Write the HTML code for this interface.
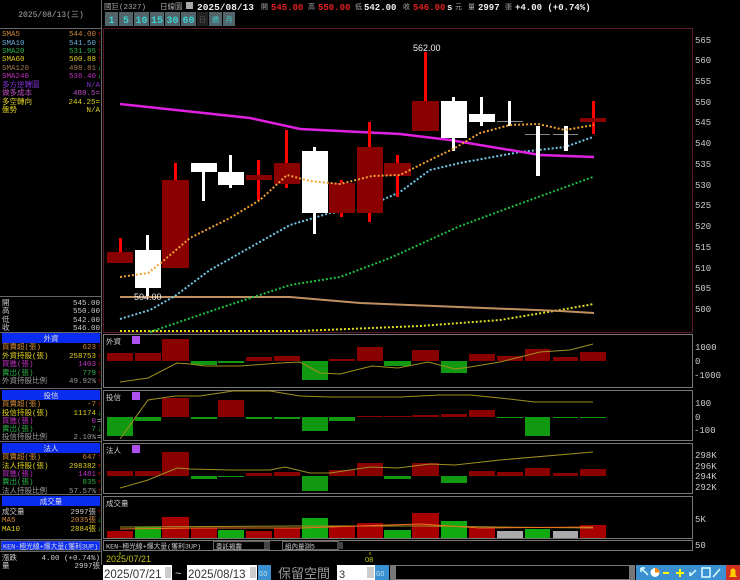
<!DOCTYPE html>
<html><head><meta charset="utf-8"><style>
html,body{margin:0;padding:0;background:#000;width:740px;height:580px;overflow:hidden}
svg{display:block}
text{font-family:"Liberation Mono","Noto Sans CJK TC",monospace}
.s{font-family:"Liberation Sans","Noto Sans CJK TC",sans-serif}
</style></head><body>
<svg width="740" height="580" viewBox="0 0 740 580" xmlns="http://www.w3.org/2000/svg" font-size="9">
<rect width="740" height="580" fill="#000"/>
<line x1="101.5" y1="0" x2="101.5" y2="565" stroke="#666"/>
<line x1="0" y1="28.5" x2="101" y2="28.5" stroke="#666"/>
<text x="51" y="17" fill="#aaa" text-anchor="middle" font-size="8">2025/08/13(三)</text>
<g font-size="7.5">
<text x="2" y="36" fill="#d08a3a">SMA5</text><text x="96" y="36" fill="#d08a3a" text-anchor="end">544.00</text><text x="97" y="36" fill="#f00">↑</text>
<text x="2" y="45" fill="#6ab0e0">SMA10</text><text x="96" y="45" fill="#6ab0e0" text-anchor="end">541.50</text><text x="97" y="45" fill="#f00">↑</text>
<text x="2" y="53" fill="#2bb04a">SMA20</text><text x="96" y="53" fill="#2bb04a" text-anchor="end">531.95</text><text x="97" y="53" fill="#f00">↑</text>
<text x="2" y="61" fill="#e0d020">SMA60</text><text x="96" y="61" fill="#e0d020" text-anchor="end">500.88</text><text x="97" y="61" fill="#f00">↑</text>
<text x="2" y="70" fill="#a07850">SMA120</text><text x="96" y="70" fill="#a07850" text-anchor="end">498.81</text><text x="97" y="70" fill="#2c2">↓</text>
<text x="2" y="78" fill="#c030c0">SMA240</text><text x="96" y="78" fill="#c030c0" text-anchor="end">536.40</text><text x="97" y="78" fill="#2c2">↓</text>
<text x="2" y="87" fill="#8030d0">多方逆轉圖</text><text x="100" y="87" fill="#8030d0" text-anchor="end">N/A</text>
<text x="2" y="95" fill="#c050c0">做多成本</text><text x="100" y="95" fill="#c050c0" text-anchor="end">488.5=</text>
<text x="2" y="104" fill="#e0d020">多空轉向</text><text x="100" y="104" fill="#e0d020" text-anchor="end">244.25=</text>
<text x="2" y="112" fill="#e0d020">盤勢</text><text x="100" y="112" fill="#e0d020" text-anchor="end">N/A</text>
</g>
<line x1="0" y1="296.5" x2="101" y2="296.5" stroke="#666"/>
<g font-size="7.5" fill="#ccc">
<text x="2" y="305">開</text><text x="100" y="305" text-anchor="end">545.00</text>
<text x="2" y="313">高</text><text x="100" y="313" text-anchor="end">550.00</text>
<text x="2" y="322">低</text><text x="100" y="322" text-anchor="end">542.00</text>
<text x="2" y="330">收</text><text x="100" y="330" text-anchor="end">546.00</text>
</g>
<line x1="0" y1="332.5" x2="101" y2="332.5" stroke="#666"/>
<rect x="2" y="333" width="98" height="10" fill="#0a2cf0"/><text x="51" y="341" fill="#ddd" text-anchor="middle" font-size="7.5">外資</text>
<g font-size="7.5">
<text x="2" y="349" fill="#d08a3a">買賣超(張)</text><text x="96" y="349" fill="#d08a3a" text-anchor="end">623</text><text x="97" y="349" fill="#f00">↑</text>
<text x="2" y="358" fill="#e0d020">外資持股(張)</text><text x="96" y="358" fill="#e0d020" text-anchor="end">258753</text><text x="97" y="358" fill="#f00">↑</text>
<text x="2" y="366" fill="#c030c0">買進(張)</text><text x="96" y="366" fill="#c030c0" text-anchor="end">1403</text><text x="97" y="366" fill="#f00">↑</text>
<text x="2" y="375" fill="#2bb04a">賣出(張)</text><text x="96" y="375" fill="#2bb04a" text-anchor="end">779</text><text x="97" y="375" fill="#f00">↑</text>
<text x="2" y="383" fill="#999">外資持股比例</text><text x="96" y="383" fill="#999" text-anchor="end">49.92%</text><text x="97" y="383" fill="#f00">↑</text>
</g>
<line x1="0" y1="388.5" x2="101" y2="388.5" stroke="#666"/>
<rect x="2" y="390" width="98" height="10" fill="#0a2cf0"/><text x="51" y="398" fill="#ddd" text-anchor="middle" font-size="7.5">投信</text>
<g font-size="7.5">
<text x="2" y="406" fill="#d08a3a">買賣超(張)</text><text x="96" y="406" fill="#d08a3a" text-anchor="end">-7</text><text x="97" y="406" fill="#f00">↑</text>
<text x="2" y="415" fill="#e0d020">投信持股(張)</text><text x="96" y="415" fill="#e0d020" text-anchor="end">11174</text><text x="97" y="415" fill="#2c2">↓</text>
<text x="2" y="423" fill="#c030c0">買進(張)</text><text x="96" y="423" fill="#c030c0" text-anchor="end">0</text><text x="97" y="423" fill="#ccc">=</text>
<text x="2" y="431" fill="#2bb04a">賣出(張)</text><text x="96" y="431" fill="#2bb04a" text-anchor="end">7</text><text x="97" y="431" fill="#2c2">↓</text>
<text x="2" y="439" fill="#999">投信持股比例</text><text x="96" y="439" fill="#999" text-anchor="end">2.10%</text><text x="97" y="439" fill="#ccc">=</text>
</g>
<line x1="0" y1="441.5" x2="101" y2="441.5" stroke="#666"/>
<rect x="2" y="443" width="98" height="10" fill="#0a2cf0"/><text x="51" y="451" fill="#ddd" text-anchor="middle" font-size="7.5">法人</text>
<g font-size="7.5">
<text x="2" y="459" fill="#d08a3a">買賣超(張)</text><text x="96" y="459" fill="#d08a3a" text-anchor="end">647</text><text x="97" y="459" fill="#f00">↑</text>
<text x="2" y="468" fill="#e0d020">法人持股(張)</text><text x="96" y="468" fill="#e0d020" text-anchor="end">298382</text><text x="97" y="468" fill="#f00">↑</text>
<text x="2" y="476" fill="#c030c0">買進(張)</text><text x="96" y="476" fill="#c030c0" text-anchor="end">1481</text><text x="97" y="476" fill="#f00">↑</text>
<text x="2" y="484" fill="#2bb04a">賣出(張)</text><text x="96" y="484" fill="#2bb04a" text-anchor="end">835</text><text x="97" y="484" fill="#f00">↑</text>
<text x="2" y="493" fill="#999">法人持股比例</text><text x="96" y="493" fill="#999" text-anchor="end">57.57%</text><text x="97" y="493" fill="#f00">↑</text>
</g>
<line x1="0" y1="494.5" x2="101" y2="494.5" stroke="#666"/>
<rect x="2" y="496" width="98" height="10" fill="#0a2cf0"/><text x="51" y="504" fill="#ddd" text-anchor="middle" font-size="7.5">成交量</text>
<g font-size="7.5">
<text x="2" y="514" fill="#ccc">成交量</text><text x="96" y="514" fill="#ccc" text-anchor="end">2997張</text><text x="97" y="514" fill="#f00">↑</text>
<text x="2" y="522" fill="#d08a3a">MA5</text><text x="96" y="522" fill="#d08a3a" text-anchor="end">2035張</text><text x="97" y="522" fill="#2c2">↓</text>
<text x="2" y="531" fill="#e0d020">MA10</text><text x="96" y="531" fill="#e0d020" text-anchor="end">2884張</text><text x="97" y="531" fill="#2c2">↓</text>
</g>
<line x1="0" y1="539.5" x2="101" y2="539.5" stroke="#666"/>
<rect x="1" y="541" width="99" height="9" fill="#0a2cf0" stroke="#aaa" stroke-width="0.5"/><text x="3" y="548.5" fill="#ddd" font-size="6.8">KEN-極光線+爆大量(獲利3UP)</text>
<line x1="0" y1="551.5" x2="101" y2="551.5" stroke="#666"/>
<g font-size="7.5" fill="#ccc">
<text x="2" y="560">漲跌</text><text x="100" y="560" text-anchor="end">4.00 (+0.74%)</text>
<text x="2" y="568">量</text><text x="100" y="568" text-anchor="end">2997張</text>
</g>

<!-- top header -->
<text x="104" y="9" fill="#aaa" font-size="7.5">國巨(2327)</text>
<text x="160" y="9" fill="#aaa" font-size="7.5">日線圖</text>
<rect x="186" y="2" width="7" height="7" fill="#aaa"/>
<g class="s" font-weight="bold" font-size="9">
<text x="197" y="10" fill="#eee" font-size="9.5">2025/08/13</text>
<text x="261" y="9" fill="#aaa" font-size="7" font-weight="normal">開</text><text x="271" y="10" fill="#e02020">545.00</text>
<text x="308" y="9" fill="#aaa" font-size="7" font-weight="normal">高</text><text x="318" y="10" fill="#e02020">550.00</text>
<text x="355" y="9" fill="#aaa" font-size="7" font-weight="normal">低</text><text x="364" y="10" fill="#eee">542.00</text>
<text x="403" y="9" fill="#aaa" font-size="7" font-weight="normal">收</text><text x="413" y="10" fill="#e02020">546.00</text>
<text x="447" y="10" fill="#eee">s</text><text x="455" y="9" fill="#aaa" font-size="7" font-weight="normal">元</text>
<text x="468" y="9" fill="#aaa" font-size="7" font-weight="normal">量</text><text x="478" y="10" fill="#eee">2997</text>
<text x="505" y="9" fill="#aaa" font-size="7" font-weight="normal">張</text><text x="515" y="10" fill="#eee">+4.00 (+0.74%)</text>
</g>
<g font-size="10" font-weight="bold" class="s" text-anchor="middle">
<rect x="105" y="12" width="13" height="14" fill="#52646a"/><text x="111.5" y="23" fill="#3cd0d0">1</text>
<rect x="119" y="12" width="14" height="14" fill="#52646a"/><text x="126" y="23" fill="#3cd0d0">5</text>
<rect x="134" y="12" width="15" height="14" fill="#52646a"/><text x="141.5" y="23" fill="#3cd0d0">10</text>
<rect x="150" y="12" width="14" height="14" fill="#52646a"/><text x="157" y="23" fill="#3cd0d0">15</text>
<rect x="165" y="12" width="15" height="14" fill="#52646a"/><text x="172.5" y="23" fill="#3cd0d0">30</text>
<rect x="181" y="12" width="15" height="14" fill="#52646a"/><text x="188.5" y="23" fill="#3cd0d0">60</text>
<rect x="197" y="12" width="11" height="14" fill="#222"/><text x="202.5" y="22" fill="#555" font-size="7" font-weight="normal">日</text>
<rect x="209" y="12" width="13" height="14" fill="#52646a"/><text x="215.5" y="22" fill="#3cd0d0" font-size="7" font-weight="normal">週</text>
<rect x="223" y="12" width="12" height="14" fill="#52646a"/><text x="229" y="22" fill="#3cd0d0" font-size="7" font-weight="normal">月</text>
</g>

<rect x="103.5" y="28.5" width="589" height="304" fill="none" stroke="#5a1a2a"/>
<g fill="#ccc" font-size="9" class="s">
<text x="695" y="43">565</text><text x="695" y="63">560</text><text x="695" y="84">555</text><text x="695" y="105">550</text><text x="695" y="125">545</text><text x="695" y="146">540</text><text x="695" y="167">535</text><text x="695" y="188">530</text><text x="695" y="208">525</text><text x="695" y="229">520</text><text x="695" y="250">515</text><text x="695" y="271">510</text><text x="695" y="291">505</text><text x="695" y="312">500</text>
</g>

<polyline points="120,331 300,331 420,326 500,320 560,310 594,304" fill="none" stroke="#e0e020" stroke-width="2" stroke-dasharray="2,2"/>
<polyline points="120,297 290,297 360,303 560,311 594,313" fill="none" stroke="#c09060" stroke-width="2"/>
<polyline points="150,332 220,308 290,285 340,277 390,258 460,226 530,200 593,177" fill="none" stroke="#20c040" stroke-width="2" stroke-dasharray="2,2"/>
<polyline points="120,319 150,310 175,296 210,270 290,225 330,213 360,210 400,192 430,170 460,163 520,152 565,147 593,137" fill="none" stroke="#70c8e8" stroke-width="2" stroke-dasharray="2,2"/>
<polyline points="120,104 250,118 300,129 400,134 450,140 540,155 594,157" fill="none" stroke="#e020e0" stroke-width="2.5"/>

<g fill="#8a0000">
<rect x="119" y="238" width="3" height="14" fill="#f00"/><rect x="107" y="252" width="26" height="11"/>
<rect x="174" y="163" width="3" height="17" fill="#f00"/><rect x="162" y="180" width="27" height="88"/>
<rect x="257" y="160" width="3" height="40" fill="#f00"/><rect x="246" y="175" width="26" height="5"/>
<rect x="285" y="130" width="3" height="58" fill="#f00"/><rect x="274" y="163" width="26" height="21"/>
<rect x="340" y="180" width="3" height="37" fill="#f00"/><rect x="329" y="183" width="26" height="30"/>
<rect x="368" y="122" width="3" height="100" fill="#f00"/><rect x="357" y="147" width="26" height="66"/>
<rect x="396" y="155" width="3" height="42" fill="#f00"/><rect x="384" y="163" width="27" height="13"/>
<rect x="424" y="52" width="3" height="49" fill="#f00"/><rect x="412" y="101" width="27" height="30"/>
<rect x="592" y="101" width="3" height="33" fill="#f00"/><rect x="580" y="118" width="26" height="4"/>
</g>
<g fill="#fff">
<rect x="146" y="235" width="3" height="61"/><rect x="135" y="250" width="26" height="38"/>
<rect x="202" y="172" width="3" height="29"/><rect x="191" y="163" width="26" height="9"/>
<rect x="229" y="155" width="3" height="33"/><rect x="218" y="172" width="26" height="13"/>
<rect x="313" y="147" width="3" height="87"/><rect x="302" y="151" width="26" height="62"/>
<rect x="452" y="97" width="3" height="54"/><rect x="441" y="101" width="26" height="37"/>
<rect x="480" y="97" width="3" height="29"/><rect x="469" y="114" width="26" height="8"/>
<rect x="497" y="121" width="26" height="1" fill="#888"/><rect x="508" y="101" width="3" height="25"/>
<rect x="525" y="134" width="25" height="1" fill="#888"/><rect x="536" y="126" width="4" height="50"/>
<rect x="553" y="134" width="25" height="1" fill="#888"/><rect x="564" y="126" width="4" height="25"/>
</g>
<polyline points="120,277 148,273 162,262 190,238 230,218 260,200 287,175 310,181 340,184 372,176 400,175 430,160 455,148 480,133 510,125 538,124 565,130 594,125" fill="none" stroke="#f0a030" stroke-width="2" stroke-dasharray="2,2"/>
<text x="413" y="51" fill="#eee" font-size="9" class="s">562.00</text>
<text x="134" y="300" fill="#eee" font-size="9" class="s">504.00</text>

<g fill="none" stroke="#777">
<rect x="103.5" y="334.5" width="589" height="53"/>
<rect x="103.5" y="390.5" width="589" height="50"/>
<rect x="103.5" y="443.5" width="589" height="50"/>
<rect x="103.5" y="496.5" width="589" height="42"/>
<rect x="103.5" y="540.5" width="589" height="10"/>
</g>
<g fill="#ccc" font-size="7.5">
<text x="106" y="344">外資</text><text x="106" y="400">投信</text><text x="106" y="453">法人</text><text x="106" y="506">成交量</text>
</g>
<g fill="#b050f0"><rect x="132" y="336" width="8" height="8"/><rect x="132" y="392" width="8" height="8"/><rect x="132" y="445" width="8" height="8"/></g>
<g fill="#ccc" font-size="9" class="s">
<text x="695" y="350">1000</text><text x="695" y="364">0</text><text x="694" y="378">-1000</text>
<text x="695" y="406">100</text><text x="695" y="420">0</text><text x="694" y="433">-100</text>
<text x="695" y="458">298K</text><text x="695" y="469">296K</text><text x="695" y="479">294K</text><text x="695" y="490">292K</text>
<text x="695" y="522">5K</text><text x="695" y="548">50</text>
</g>

<g fill="#8a0000">
<rect x="107" y="353" width="26" height="8"/><rect x="135" y="353" width="26" height="8"/><rect x="162" y="339" width="27" height="22"/>
<rect x="246" y="357" width="26" height="4"/><rect x="274" y="356" width="26" height="5"/><rect x="329" y="359" width="26" height="2"/>
<rect x="357" y="347" width="26" height="14"/><rect x="412" y="350" width="27" height="11"/><rect x="469" y="354" width="26" height="7"/>
<rect x="497" y="356" width="26" height="5"/><rect x="525" y="349" width="25" height="12"/><rect x="553" y="357" width="25" height="4"/><rect x="580" y="352" width="26" height="9"/>
</g>
<g fill="#119911">
<rect x="191" y="361" width="26" height="4"/><rect x="218" y="361" width="26" height="2"/><rect x="302" y="361" width="26" height="19"/>
<rect x="384" y="361" width="27" height="5"/><rect x="441" y="361" width="26" height="12"/>
</g>
<polyline points="120,382 148,378 177,363 190,364 205,366 240,366 280,363 300,362 320,373 340,374 372,366 398,368 428,362 455,369 470,367 500,362 540,352 570,350 593,344" fill="none" stroke="#a09020" stroke-width="1"/>

<g fill="#8a0000">
<rect x="162" y="398" width="27" height="19"/><rect x="218" y="400" width="26" height="17"/>
<rect x="357" y="416" width="26" height="1"/><rect x="384" y="416" width="27" height="1"/><rect x="412" y="415" width="27" height="2"/>
<rect x="441" y="414" width="26" height="3"/><rect x="469" y="410" width="26" height="7"/>
</g>
<g fill="#119911">
<rect x="107" y="417" width="26" height="19"/><rect x="135" y="417" width="26" height="4"/><rect x="191" y="417" width="26" height="2"/>
<rect x="246" y="417" width="26" height="2"/><rect x="274" y="417" width="26" height="2"/><rect x="302" y="417" width="26" height="14"/>
<rect x="329" y="417" width="26" height="4"/><rect x="497" y="417" width="26" height="1"/><rect x="525" y="417" width="25" height="19"/>
<rect x="553" y="417" width="25" height="1"/><rect x="580" y="417" width="26" height="1"/>
</g>
<polyline points="120,439 148,400 175,396 200,396 233,391 270,391 300,396 330,397 400,397 440,395 470,395 500,398 535,402 593,402" fill="none" stroke="#a09020" stroke-width="1"/>

<g fill="#8a0000">
<rect x="107" y="471" width="26" height="5"/><rect x="135" y="471" width="26" height="5"/><rect x="162" y="452" width="27" height="24"/>
<rect x="246" y="473" width="26" height="3"/><rect x="274" y="472" width="26" height="4"/><rect x="329" y="470" width="26" height="6"/>
<rect x="357" y="463" width="26" height="13"/><rect x="412" y="463" width="27" height="13"/><rect x="469" y="471" width="26" height="5"/>
<rect x="497" y="472" width="26" height="4"/><rect x="525" y="468" width="25" height="8"/><rect x="553" y="473" width="25" height="3"/><rect x="580" y="469" width="26" height="7"/>
</g>
<g fill="#119911">
<rect x="191" y="476" width="26" height="3"/><rect x="218" y="476" width="26" height="1"/><rect x="302" y="476" width="26" height="15"/>
<rect x="384" y="476" width="27" height="3"/><rect x="441" y="476" width="26" height="7"/>
</g>
<polyline points="120,488 148,480 177,468 190,469 230,470 270,470 285,467 310,473 330,473 370,467 398,468 430,464 455,465 500,460 593,452" fill="none" stroke="#a09020" stroke-width="1"/>

<g fill="#a80000">
<rect x="107" y="531" width="26" height="7"/><rect x="162" y="517" width="27" height="21"/><rect x="191" y="528" width="26" height="10"/>
<rect x="246" y="531" width="26" height="7"/><rect x="274" y="528" width="26" height="10"/><rect x="329" y="526" width="26" height="12"/>
<rect x="357" y="523" width="26" height="15"/><rect x="412" y="513" width="27" height="25"/><rect x="469" y="528" width="26" height="10"/><rect x="580" y="525" width="26" height="13"/>
</g>
<g fill="#11aa11">
<rect x="135" y="527" width="26" height="11"/><rect x="218" y="530" width="26" height="8"/><rect x="302" y="518" width="26" height="20"/>
<rect x="384" y="530" width="27" height="8"/><rect x="441" y="521" width="26" height="17"/><rect x="525" y="529" width="25" height="9"/>
</g>
<g fill="#aaa"><rect x="497" y="531" width="26" height="7"/><rect x="553" y="531" width="25" height="7"/></g>
<polyline points="120,527 300,526 420,526 500,527 593,528" fill="none" stroke="#a09020" stroke-width="1"/>
<polyline points="120,529 200,528 300,528 420,524 480,528 593,527" fill="none" stroke="#f07020" stroke-width="1"/>

<text x="106" y="548.5" fill="#ccc" font-size="6.8">KEN-極光線+爆大量(獲利3UP)</text>
<rect x="213.5" y="541.5" width="56" height="8" fill="none" stroke="#666"/><text x="216" y="548.5" fill="#ccc" font-size="6.5">委託揭露</text>
<rect x="264" y="542" width="6" height="7" fill="#444"/>
<rect x="282.5" y="541.5" width="56" height="8" fill="none" stroke="#666"/><text x="285" y="548.5" fill="#ccc" font-size="6.5">組內量測5</text>
<rect x="337" y="542" width="6" height="7" fill="#444"/>
<line x1="120" y1="552" x2="120" y2="555" stroke="#aa0"/>
<text x="106" y="562" fill="#c0c020" font-size="9" class="s">2025/07/21</text>
<line x1="370" y1="552" x2="370" y2="555" stroke="#aa0"/>
<text x="365" y="562" fill="#c0c020" font-size="7.5" class="s">08</text>

<rect x="103" y="565" width="69" height="15" fill="#fff"/><text x="104" y="578" fill="#333" font-size="11.5" class="s">2025/07/21</text>
<rect x="165" y="567" width="6" height="11" fill="#ccc"/>
<text x="175" y="577" fill="#ccc" font-size="11">~</text>
<rect x="187" y="565" width="70" height="15" fill="#fff"/><text x="188" y="578" fill="#333" font-size="11.5" class="s">2025/08/13</text>
<rect x="250" y="567" width="6" height="11" fill="#ccc"/>
<rect x="258" y="565" width="13" height="15" fill="#3a90d0"/><text x="259" y="576" fill="#bde" font-size="7">GO</text>
<text x="278" y="578" fill="#999" font-size="13" class="s">保留空間</text>
<rect x="337" y="565" width="38" height="15" fill="#fff"/><text x="339" y="578" fill="#333" font-size="11" class="s">3</text>
<rect x="367" y="567" width="7" height="11" fill="#ccc"/>
<rect x="375" y="565" width="14" height="15" fill="#3a90d0"/><text x="376" y="576" fill="#bde" font-size="7">GO</text>
<rect x="390" y="565" width="245" height="15" fill="#777"/>
<rect x="396" y="566" width="233" height="13" fill="#000"/>
<rect x="636" y="565" width="104" height="15" fill="#3a90d0"/>
<g stroke="#dff" stroke-width="1.5" fill="none">
<path d="M641 568 L648 575 M641 568 L641 572 M641 568 L645 568"/>
<path d="M663 573 L669 573" stroke="#ff0" stroke-width="2"/>
<path d="M676 573 L684 573 M680 569 L680 577" stroke="#ff0" stroke-width="2"/>
<path d="M690 576 L696 570 M690 576 L690 572"/>
<path d="M702 568 h8 v9 h-8 z"/>
<path d="M713 577 L720 569"/>
</g>
<circle cx="655" cy="572.5" r="4.5" fill="#fff"/><path d="M655 572.5 L655 568 A4.5 4.5 0 0 1 659.5 572.5 Z" fill="#f80"/>
<rect x="726" y="565" width="14" height="15" fill="#d03020"/><path d="M729 577 h8 l-1.5 -2 v-4 a2.5 2.5 0 0 0 -5 0 v4 z" fill="#fc0"/>
</svg>
</body></html>
